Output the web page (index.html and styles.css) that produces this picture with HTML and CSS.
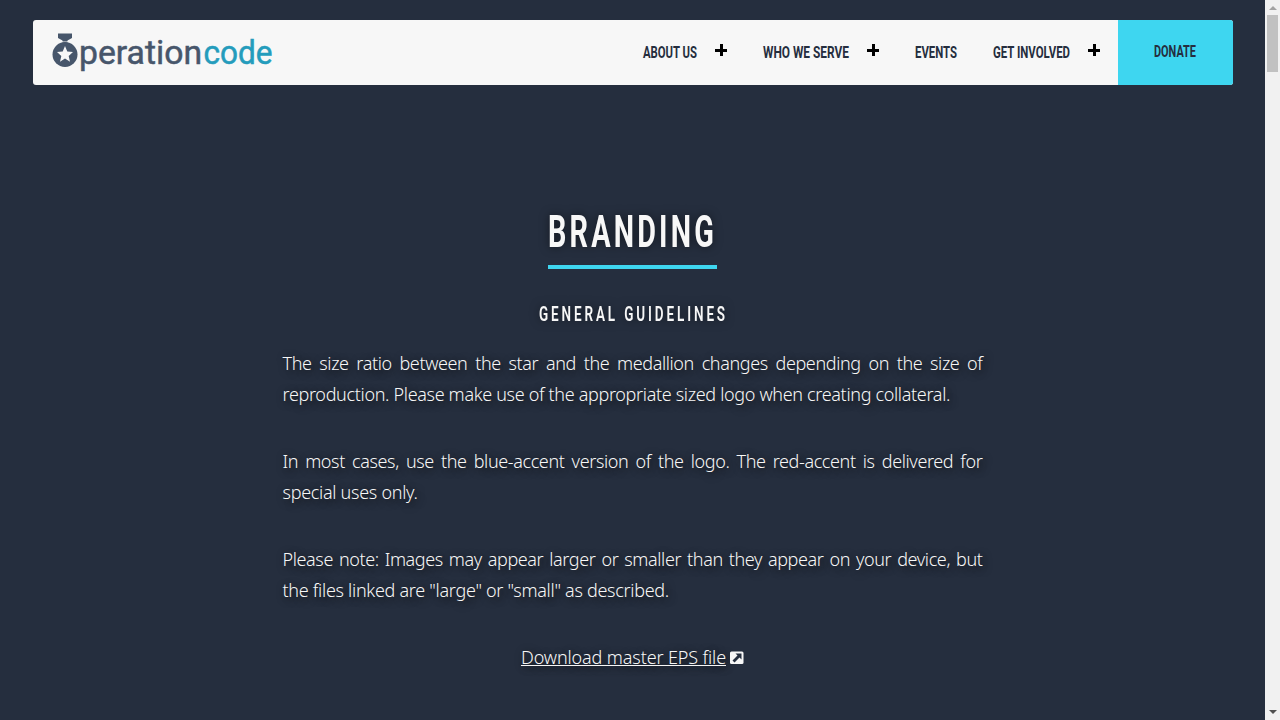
FILE: index.html
```html
<!DOCTYPE html>
<html lang="en">
<head>
<meta charset="utf-8">
<title>Branding | Operation Code</title>
<link rel="stylesheet" href="styles.css">
</head>
<body>
<div class="page">
  <header class="header">
    <a class="brand">
      <svg class="logo" width="222" height="42" viewBox="0 0 222 42" role="img" aria-label="Operation Code">
        <path class="medal" d="M6 1.500h14v4.500L15.500 8.500V11h-5V8.500L6 6z"/>
        <path class="star" d="M6.500 7.200L10.800 9.600h4.400l4.300-2.400-3 3.400h-7z"/>
        <circle class="medal" cx="13" cy="22.500" r="12.500"/>
        <path class="star" d="M13 14l2.300 5.600 5.700.4-4.300 3.900 1.300 5.800-5-3.100-5 3.100 1.300-5.800L5 20l5.700-.4z"/>
        <text class="wordmark slate" x="27" y="32" textLength="123" lengthAdjust="spacingAndGlyphs">peration</text>
        <text class="wordmark teal" x="151.500" y="32" textLength="69" lengthAdjust="spacingAndGlyphs">code</text>
      </svg>
    </a>
    <nav class="nav">
      <a class="item"><svg class="label" width="54" height="20"><text x="0" y="15" textLength="54" lengthAdjust="spacingAndGlyphs">ABOUT US</text></svg></a>
      <button class="plus" aria-label="Open About Us"></button>
      <a class="item"><svg class="label" width="86" height="20"><text x="0" y="15" textLength="86" lengthAdjust="spacingAndGlyphs">WHO WE SERVE</text></svg></a>
      <button class="plus" aria-label="Open Who We Serve"></button>
      <a class="item"><svg class="label" width="42" height="20"><text x="0" y="15" textLength="42" lengthAdjust="spacingAndGlyphs">EVENTS</text></svg></a>
      <a class="item"><svg class="label" width="77" height="20"><text x="0" y="15" textLength="77" lengthAdjust="spacingAndGlyphs">GET INVOLVED</text></svg></a>
      <button class="plus" aria-label="Open Get Involved"></button>
      <a class="donate"><svg class="label" width="43" height="20"><text x="0" y="14" textLength="42" lengthAdjust="spacingAndGlyphs">DONATE</text></svg></a>
    </nav>
  </header>
  <main class="main">
    <h1 class="title"><svg class="glow" width="169" height="50"><text x="0" y="39" textLength="169" lengthAdjust="spacingAndGlyphs">BRANDING</text></svg></h1>
    <h2 class="subtitle"><svg class="glow" width="188" height="26"><text x="0" y="21" textLength="189" lengthAdjust="spacingAndGlyphs">GENERAL GUIDELINES</text></svg></h2>
    <div class="copy">
      <p class="para"><span class="line full">The size ratio between the star and the medallion changes depending on the size of</span>
      <span class="line tight">reproduction. Please make use of the appropriate sized logo when creating collateral.</span></p>
      <p class="para"><span class="line full">In most cases, use the blue-accent version of the logo. The red-accent is delivered for</span>
      <span class="line">special uses only.</span></p>
      <p class="para"><span class="line full">Please note: Images may appear larger or smaller than they appear on your device, but</span>
      <span class="line">the files linked are "large" or "small" as described.</span></p>
      <p class="para download"><a class="link">Download master EPS file</a><svg class="external" width="14" height="14" viewBox="0 0 14 14"><rect y=".5" width="13.500" height="12.500" rx="1.500"/><path d="M5.500 2.500h6v6L9.500 6.500 4.500 11.500 2.500 9.500 7.500 4.500z"/></svg></p>
    </div>
  </main>
</div>
<div class="scrollbar">
  <svg width="15" height="15"><path class="idle" d="M4 10h8L8 6z"/></svg>
  <div class="thumb"></div>
  <svg class="down" width="15" height="15"><path d="M4 5h8L8 9z"/></svg>
</div>
</body>
</html>
```

FILE: styles.css
```css
* { box-sizing: border-box; }
body {
  margin: 0;
  display: flex;
  height: 720px;
  overflow: hidden;
  background: #252e3e;
  color: #f7f7f7;
  font-family: "Noto Sans", sans-serif;
}
.page { flex: 1; padding: 20px 32px 0 33px; }
.header {
  display: flex;
  justify-content: space-between;
  height: 65px;
  background: #f7f7f7;
  border-radius: 3px;
  overflow: hidden;
}
.brand { padding: 12px 0 0 19px; }
.logo { display: block; overflow: visible; }
.medal { fill: #47566b; }
.star { fill: #f7f7f7; }
.wordmark { font: 400 34px Roboto, sans-serif; }
.slate { fill: #47566b; stroke: #47566b; stroke-width: .5; }
.teal { fill: #249cbc; stroke: #249cbc; stroke-width: .5; }
.nav { display: flex; align-items: center; }
.item { padding: 0 18px; }
.label { display: block; overflow: visible; fill: #252e3e; font: 700 17px Roboto, sans-serif; }
.plus {
  width: 12px;
  height: 12px;
  margin: 0 18px 5px 0;
  padding: 0;
  border: 0;
  background:
    linear-gradient(#000, #000) 0 5px / 12px 3px no-repeat,
    linear-gradient(#000, #000) 5px 0 / 3px 12px no-repeat;
}
.donate {
  display: flex;
  align-items: center;
  width: 115px;
  height: 65px;
  padding-left: 36px;
  background: #3ed6f0;
}
.main { display: flex; flex-direction: column; align-items: center; padding: 123px 1px 0 0; }
.title { margin: 0; height: 61px; border-bottom: 4px solid #3ed6f0; }
.subtitle { margin: 31px 0 0; height: 26px; }
.glow {
  display: block;
  overflow: visible;
  fill: #f7f7f7;
  filter: drop-shadow(0 0 5px rgba(0, 0, 0, .5));
}
.title .glow { font: 700 45px Roboto, sans-serif; letter-spacing: 5px; }
.subtitle .glow { font: 600 21px Roboto, sans-serif; letter-spacing: 4.500px; }
.copy {
  width: 700px;
  margin-top: 22px;
  font-size: 18px;
  line-height: 31px;
  font-weight: 300;
  letter-spacing: -.29px;
  text-shadow: 2px 2px 8px #101010;
}
.para { margin: 0 0 36px; }
.line { display: block; white-space: nowrap; }
.full { text-align-last: justify; letter-spacing: -.38px; }
.tight { letter-spacing: -.33px; }
.download { display: flex; align-items: center; justify-content: center; gap: 4px; letter-spacing: -.12px; }
.link { text-decoration: underline; }
.external rect { fill: #f7f7f7; }
.external path { fill: #252e3e; }
.scrollbar { display: flex; flex-direction: column; width: 15px; background: #f1f1f1; }
.scrollbar path { fill: #505050; }
.scrollbar .idle { fill: #a3a3a3; }
.thumb { height: 57px; margin: 0 2px; background: #c1c1c1; }
.down { margin-top: auto; }
```
